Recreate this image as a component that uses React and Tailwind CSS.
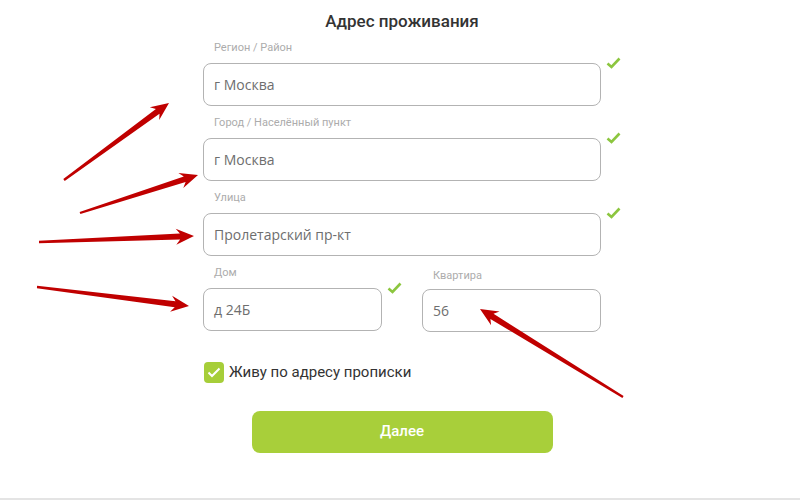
import React from 'react'

const ARROWS = [
    [[64, 180], [169, 103]],
    [[80, 213], [198, 175]],
    [[39, 242], [194, 236]],
    [[37, 287], [189, 306]],
    [[623, 397], [480, 309]],
]

function arrowPoints(tail, tip) {
    const dx = tip[0] - tail[0]
    const dy = tip[1] - tail[1]
    const len = Math.hypot(dx, dy)
    const ux = dx / len
    const uy = dy / len
    const nx = -uy
    const ny = ux
    const head = 18
    const bx = tip[0] - ux * head
    const by = tip[1] - uy * head
    // barbs sit a bit behind the neck
    const kx = tip[0] - ux * (head - 4)
    const ky = tip[1] - uy * (head - 4)
    const p = (x, y) => `${x.toFixed(1)},${y.toFixed(1)}`
    return [
        p(tail[0] + nx * 1.2, tail[1] + ny * 1.2),
        p(kx + nx * 3, ky + ny * 3),
        p(bx + nx * 8, by + ny * 8),
        p(tip[0], tip[1]),
        p(bx - nx * 8, by - ny * 8),
        p(kx - nx * 3, ky - ny * 3),
        p(tail[0] - nx * 1.2, tail[1] - ny * 1.2),
    ].join(' ')
}

function Tick() {
    return (
        <svg width="15" height="12" viewBox="0 0 15 12" className="absolute -right-[20px] -top-[6px]">
            <polyline points="1.5,6.5 5.5,10 13.5,1.5" fill="none" stroke="#8cc63f" strokeWidth="2.6" />
        </svg>
    )
}

function Field({ label, value, ok, className = '', labelClass = 'mb-[9px]' }) {
    return (
        <div className={className}>
            <div className={`pl-[11px] text-[11px] leading-[13px] text-[#acacac] ${labelClass}`}>{label}</div>
            <div className="relative">
                <div className="flex h-[43px] items-center rounded-[8px] border border-[#b3b3b3] pl-[10px] text-[14px] text-[#6e6e6e] font-['Open_Sans',sans-serif]">
                    {value}
                </div>
                {ok && <Tick />}
            </div>
        </div>
    )
}

export default function App() {
    return (
        <div className="relative flex h-[500px] w-full flex-col bg-white font-['Roboto',sans-serif]">
            <div className="ml-[203px] w-[398px] pt-[11px]">
                <h1 className="mb-[10px] text-center text-[17px] font-medium leading-[20px] text-[#333]">Адрес проживания</h1>

                <div className="flex flex-col gap-[10px]">
                    <Field label="Регион / Район" value="г Москва" ok />
                    <Field label="Город / Населённый пункт" value="г Москва" ok />
                    <Field label="Улица" value="Пролетарский пр-кт" ok />
                    <div className="flex gap-[40px]">
                        <Field label="Дом" value="д 24Б" ok className="w-[179px]" />
                        <Field label="Квартира" value="56" className="mt-[3px] w-[179px]" labelClass="mb-[7px]" />
                    </div>
                </div>

                {/* checkbox */}
                <div className="mt-[29px] flex items-center gap-[5px] pl-[1px]">
                    <div className="flex h-[21px] w-[20px] items-center justify-center rounded-[4px] bg-[#a6ce39]">
                        <svg width="14" height="11" viewBox="0 0 14 11">
                            <polyline points="1.5,5.5 5,9 12.5,1.5" fill="none" stroke="#fff" strokeWidth="2" />
                        </svg>
                    </div>
                    <span className="text-[15px] text-[#333]">Живу по адресу прописки</span>
                </div>

                <button className="mx-auto mt-[27px] flex h-[42px] w-[301px] items-center justify-center rounded-[8px] bg-[#a8cf3a] text-[15px] font-medium text-white">
                    Далее
                </button>
            </div>

            <div className="mt-auto h-[2px] w-full bg-[#e4e4e4]" />

            {/* annotation arrows */}
            <svg className="pointer-events-none absolute inset-0" width="800" height="500" viewBox="0 0 800 500">
                {ARROWS.map(([tail, tip], i) => (
                    <polygon key={i} points={arrowPoints(tail, tip)} fill="#c00000" />
                ))}
            </svg>
        </div>
    )
}
